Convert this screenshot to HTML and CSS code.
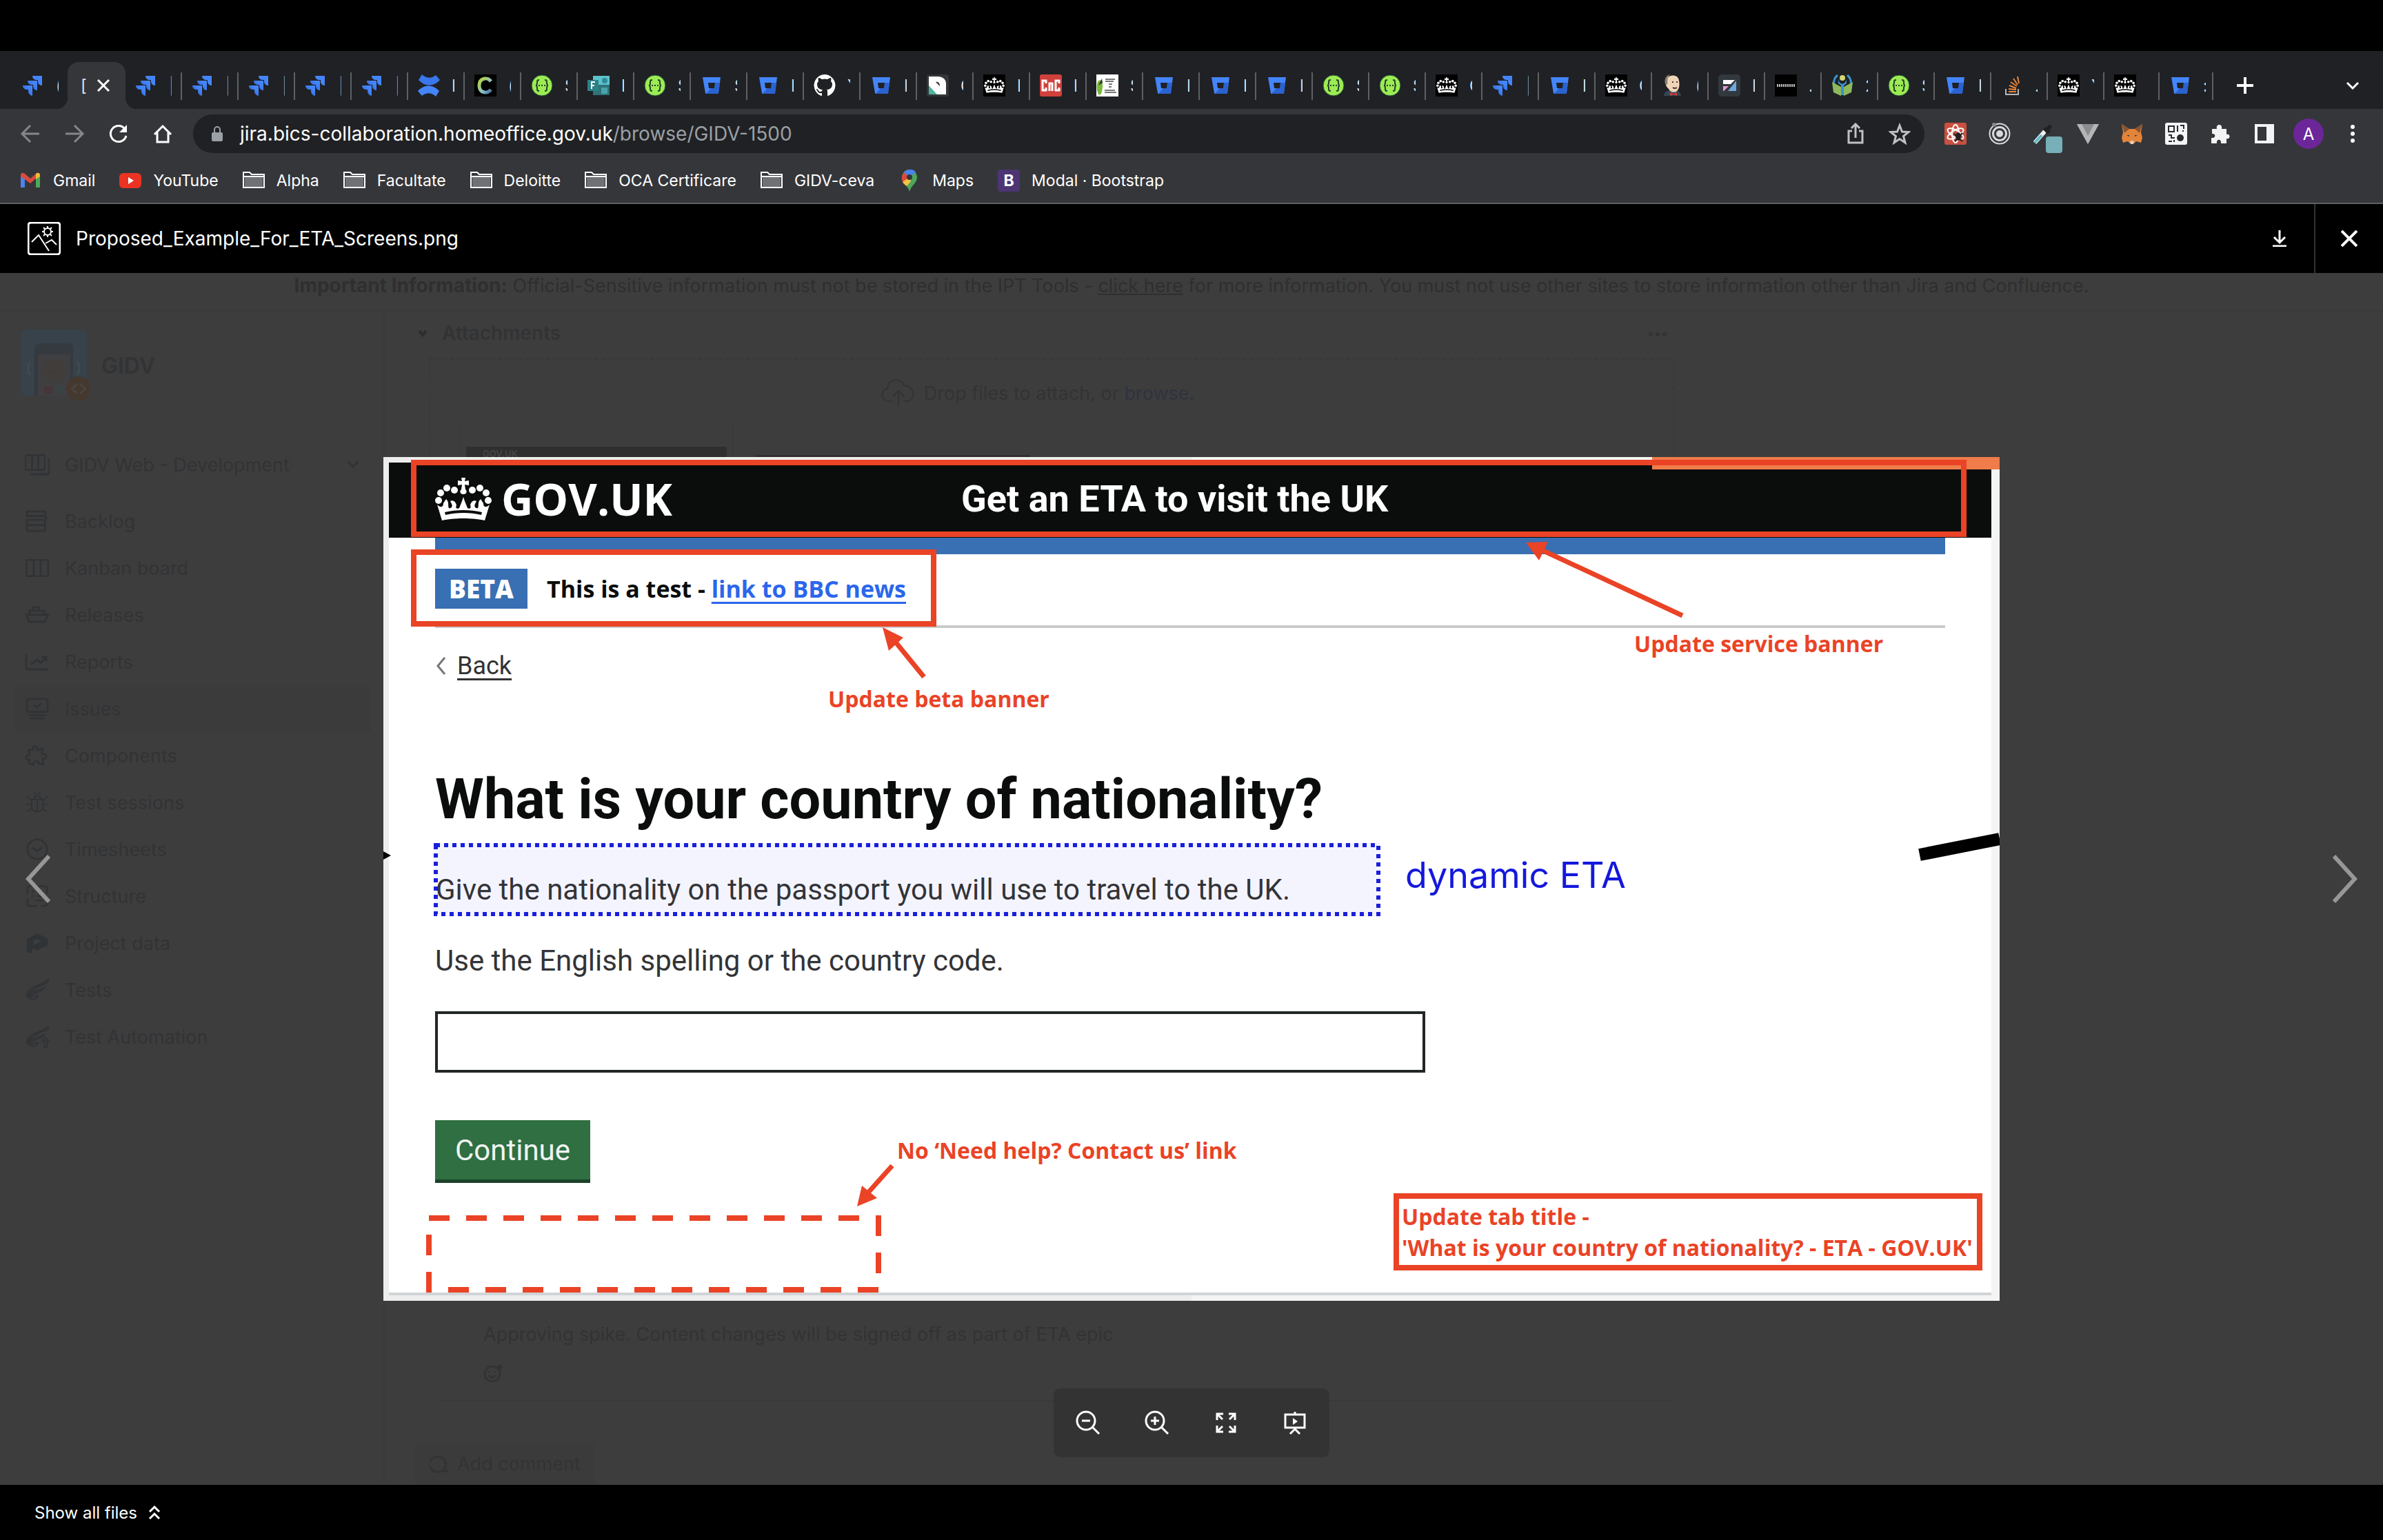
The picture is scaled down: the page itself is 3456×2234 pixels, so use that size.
FILE: index.html
```html
<!DOCTYPE html>
<html lang="en">
<head>
<meta charset="utf-8">
<title>[GIDV-1500] - Jira</title>
<link rel="stylesheet" href="styles.css">
</head>
<body>
<svg class="sprite" aria-hidden="true">
  <defs>
    <linearGradient id="g-jira" x1="1" y1="0" x2="0" y2="1"><stop offset=".3" stop-color="#4485fb"/><stop offset="1" stop-color="#2459c4"/></linearGradient>
    <linearGradient id="g-c" x1="0" y1="0" x2="1" y2="1"><stop offset="0" stop-color="#b5d334"/><stop offset=".6" stop-color="#8fc0c9"/><stop offset="1" stop-color="#3f6fa0"/></linearGradient>
    <symbol id="jira" viewBox="0 0 32 32">
      <path d="M15 2h14v14c-3.500 0-6-2.500-6-6V8h-2c-3.500 0-6-2.500-6-6z" fill="#4485fb"/>
      <path d="M8 9h14v14c-3.500 0-6-2.500-6-6v-2h-2c-3.500 0-6-2.500-6-6z" fill="url(#g-jira)"/>
      <path d="M1 16h14v15c-3.500-.500-6-3-6-7v-2H7c-3.500 0-6-2.500-6-6z" fill="url(#g-jira)"/>
    </symbol>
    <symbol id="confluence" viewBox="0 0 32 32">
      <path d="M1 8 6 0c6 6 14 6 20 1l6 7c-9 10-22 10-31 0z" fill="#3a76ec"/>
      <path d="M31 24 26 32c-6-6-14-6-20-1l-6-7c9-10 22-10 31 0z" fill="#4485fb"/>
    </symbol>
    <symbol id="cee" viewBox="0 0 32 32"><path d="M0 0h32v32H0z"/><path d="M24 10c-5-7-17-5-17 6s12 13 17 6" fill="none" stroke="url(#g-c)" stroke-width="5"/></symbol>
    <symbol id="swagger" viewBox="0 0 32 32">
      <circle cx="16" cy="16" r="15" fill="#9ceb52" stroke="#24523f"/>
      <path d="M12 8c-3 0-3 1-3 4s-1 4-2 4c1 0 2 1 2 4s0 4 3 4M20 8c3 0 3 1 3 4s1 4 2 4c-1 0-2 1-2 4s0 4-3 4" fill="none" stroke="#234028" stroke-width="2"/>
      <path d="M11 15h2v2h-2zM15 15h2v2h-2zM19 15h2v2h-2z" fill="#234028"/>
    </symbol>
    <symbol id="forms" viewBox="0 0 32 32">
      <path d="M8 2h24v28H8z" fill="#2f7277"/><path d="M8 2h24v13H8z" fill="#5cc3cd"/><path d="M20 19h9v9h-9z" fill="#4aa3ab"/>
      <circle cx="25" cy="9" r="4" fill="#2f8a94"/><path d="M0 8h16v16H0z" fill="#2c8187"/>
      <path d="M11 11H6v10M6 16h4" fill="none" stroke="#fff" stroke-width="2"/>
    </symbol>
    <symbol id="bitbucket" viewBox="0 0 32 32">
      <path d="M3 4h26l-3 23q0 1-1 1H8q-1 0-1-1z" fill="#4485fb"/><path d="m28 12-2 15q0 1-1 1H8l7-8h5l1-8z" fill="#2b62cf"/><path d="M11 12h10l-1 8h-8z" fill="#202124"/>
    </symbol>
    <symbol id="github" viewBox="0 0 32 32"><path fill="#fff" d="M16 0a16 16 0 0 0-5 31c1 0 1-.4 1-1v-3c-5 1-6-2-6-2-1-2-2-3-2-3-1-1 0-1 0-1 2 0 3 2 3 2 1 3 4 2 5 1 0-1 1-2 1-2-4 0-8-2-8-8 0-2 1-3 2-4 0-1-1-2 0-5 0 0 2 0 5 2a17 17 0 0 1 8 0c3-2 5-2 5-2 1 3 0 4 0 5 1 1 2 2 2 4 0 6-4 8-8 8 1 1 1 2 1 3v5c0 .6 0 1 1 1A16 16 0 0 0 16 0z"/></symbol>
    <symbol id="slash" viewBox="0 0 32 32"><rect width="32" height="32" rx="4" fill="#333637"/><path d="M3 3h13c8 0 13 5 12 13v13h-5L8 7H3z" fill="#fff"/><path d="M3 5h5l15 24H3z" fill="#fff"/><path d="m3 16 12 13H3z" fill="#4fb39f"/><path d="M13 11c4-1 6 2 6 6z" fill="#333637"/></symbol>
    <symbol id="crown" viewBox="0 0 82 62">
      <g fill="currentColor">
        <circle cx="5" cy="33" r="5"/><circle cx="8" cy="22" r="5"/><circle cx="17" cy="15" r="5"/><circle cx="28" cy="18" r="5"/>
        <circle cx="77" cy="33" r="5"/><circle cx="74" cy="22" r="5"/><circle cx="65" cy="15" r="5"/><circle cx="54" cy="18" r="5"/>
        <path d="M38 0h6l-1 5 6-1v7l-6-1 1 7c3 2 2 7-3 7s-6-5-3-7l1-7-6 1V4l6 1z"/>
        <path fill-rule="evenodd" d="M3 39c5 5 9 4 9-2l4-6c5 5 2 9 4 13 3 1 6-2 4-6l-2-4c4-2 8 1 9 6-2 4 1 6 4 4l4-10 2-6 2 6 4 10c3 2 6 0 4-4 1-5 5-8 9-6l-2 4c-2 4 1 7 4 6 2-4-1-8 4-13l4 6c0 6 4 7 9 2l-7 23C55 58 27 58 10 62zM15 54c16-4 36-4 52 0l1-4c-17-4-37-4-54 0z"/>
      </g>
    </symbol>
    <symbol id="govcrown" viewBox="0 0 32 32"><path d="M0 0h32v32H0z"/><g color="#fff"><use href="#crown" x="1" y="4" width="30" height="23"/></g></symbol>
    <symbol id="cnc" viewBox="0 0 32 32"><rect width="32" height="32" rx="3" fill="#d0403c"/><path d="M9 13V9H4v14h5v-4M14 24V13h4v11M28 13V9h-5v14h5v-4" fill="none" stroke="#fff" stroke-width="3"/></symbol>
    <symbol id="spring" viewBox="0 0 32 32"><path d="M0 0h32v32H0z" fill="#fff"/><path d="M2 10q8-6 7 8t-6 11q-4-8-1-19z" fill="#7ab83a"/><path d="m3 16 5-10 1 6z" fill="#333"/><path d="M13 7h14M13 10h12M18 14h5M18 18h4M12 23h15M12 26h17" stroke="#777" stroke-width="2"/></symbol>
    <symbol id="jenkins" viewBox="0 0 32 32">
      <path d="M3 31c0-5 4-7 8-8h10c4 1 6 4 7 8z" fill="#2f4858"/><path d="M6 9C7 0 24-2 25 9c1 6 1 12-4 16-5 2-9 0-11-4C6 18 5 14 6 9z" fill="#efd5b8"/><path d="M5 14c-2-8 2-13 7-14-5 5-3 8-4 15z" fill="#8a8072"/>
      <path d="M15 11h2M21 11h2M16 19q3 2 6 0" stroke="#4b3a30" stroke-width="2"/><path d="m12 26 5 2 5-2v5l-5-2-5 2z" fill="#d33b33"/>
    </symbol>
    <symbol id="fem" viewBox="0 0 32 32"><rect width="32" height="32" rx="5" fill="#32393e"/><path d="M7 8h17l-6 6H7z" fill="#fff"/><path d="M26 9v15H14z" fill="#6fa8dc"/><path d="M7 17h8l-7 7H7z" fill="#e39ad4"/></symbol>
    <symbol id="devevents" viewBox="0 0 32 32"><path d="M0 0h32v32H0z"/><path d="M3 16h26" stroke="#bbb" stroke-width="4" stroke-dasharray="2 1"/></symbol>
    <symbol id="book" viewBox="0 0 32 32"><path d="M9 1C0 8 3 24 13 29M23 1c9 7 6 23-4 28" fill="none" stroke="#3d92cf" stroke-width="3"/><path d="m1 11 13 7v13L3 26zM31 11l-13 7v13l11-5z" fill="#8db95c"/><circle cx="16" cy="5" r="4" fill="#d4d877"/><path d="M10 6c1 10 11 10 12 0v7l-4 3v14h-4V16l-4-3z" fill="#3d92cf"/></symbol>
    <symbol id="stack" viewBox="0 0 32 32"><path d="M7 21v8h18v-8" fill="none" stroke="#b4b7ba" stroke-width="2"/><path d="M11 25h11M11 21l11 1M12 16l10 4M14 11l9 6M18 6l6 9M24 3l2 10" stroke="#e8863a" stroke-width="2"/></symbol>
    <symbol id="folder" viewBox="0 0 32 24"><path d="M1 1h9l3 3h18v19H1z" fill="none" stroke="#fff" stroke-width="2"/><path d="M3 8h26v14H3z" fill="#707174"/><path d="M1 7h30" stroke="#fff" stroke-width="2"/></symbol>
    <symbol id="board" viewBox="0 0 34 26"><rect x="1" y="1" width="32" height="24" rx="3"/><path d="M12 1v24M22 1v24"/></symbol>
    <symbol id="feather" viewBox="0 0 36 34"><path d="M1 28C4 10 18 14 35 1c1 6-6 7-12 9L4 22M3 26c6-8 16-6 26-13-2 6-8 6-14 9L3 27c5 6 14 6 16-1L6 28"/></symbol>
  </defs>
</svg>

<div class="menubar"></div>

<nav class="tabs" aria-label="Tabs">
  <a class="tab" href="#"><svg><use href="#jira"/></svg><span>(</span></a>
  <a class="tab active" href="#"><span>[</span><svg viewBox="0 0 18 18"><path d="m1 1 16 16M17 1 1 17" stroke="#fff" stroke-width="3"/></svg></a>
  <a class="tab plain" href="#"><svg><use href="#jira"/></svg><span class="dim">|</span></a>
  <a class="tab" href="#"><svg><use href="#jira"/></svg><span class="dim">|</span></a>
  <a class="tab" href="#"><svg><use href="#jira"/></svg><span class="dim">|</span></a>
  <a class="tab" href="#"><svg><use href="#jira"/></svg><span class="dim">|</span></a>
  <a class="tab" href="#"><svg><use href="#jira"/></svg><span class="dim">|</span></a>
  <a class="tab" href="#"><svg><use href="#confluence"/></svg><span>I</span></a>
  <a class="tab" href="#"><svg><use href="#cee"/></svg><span>(</span></a>
  <a class="tab" href="#"><svg><use href="#swagger"/></svg><span>S</span></a>
  <a class="tab" href="#"><svg><use href="#forms"/></svg><span>I</span></a>
  <a class="tab" href="#"><svg><use href="#swagger"/></svg><span>S</span></a>
  <a class="tab" href="#"><svg><use href="#bitbucket"/></svg><span>S</span></a>
  <a class="tab" href="#"><svg><use href="#bitbucket"/></svg><span>I</span></a>
  <a class="tab" href="#"><svg><use href="#github"/></svg><span>Y</span></a>
  <a class="tab" href="#"><svg><use href="#bitbucket"/></svg><span>I</span></a>
  <a class="tab" href="#"><svg><use href="#slash"/></svg><span>C</span></a>
  <a class="tab" href="#"><svg><use href="#govcrown"/></svg><span>I</span></a>
  <a class="tab" href="#"><svg><use href="#cnc"/></svg><span>I</span></a>
  <a class="tab" href="#"><svg><use href="#spring"/></svg><span>S</span></a>
  <a class="tab" href="#"><svg><use href="#bitbucket"/></svg><span>I</span></a>
  <a class="tab" href="#"><svg><use href="#bitbucket"/></svg><span>I</span></a>
  <a class="tab" href="#"><svg><use href="#bitbucket"/></svg><span>I</span></a>
  <a class="tab" href="#"><svg><use href="#swagger"/></svg><span>S</span></a>
  <a class="tab" href="#"><svg><use href="#swagger"/></svg><span>S</span></a>
  <a class="tab" href="#"><svg><use href="#govcrown"/></svg><span>C</span></a>
  <a class="tab" href="#"><svg><use href="#jira"/></svg><span class="dim">|</span></a>
  <a class="tab" href="#"><svg><use href="#bitbucket"/></svg><span>I</span></a>
  <a class="tab" href="#"><svg><use href="#govcrown"/></svg><span>C</span></a>
  <a class="tab" href="#"><svg><use href="#jenkins"/></svg><span>(</span></a>
  <a class="tab" href="#"><svg><use href="#fem"/></svg><span>I</span></a>
  <a class="tab" href="#"><svg><use href="#devevents"/></svg><span>.</span></a>
  <a class="tab" href="#"><svg><use href="#book"/></svg><span>2</span></a>
  <a class="tab" href="#"><svg><use href="#swagger"/></svg><span>S</span></a>
  <a class="tab" href="#"><svg><use href="#bitbucket"/></svg><span>I</span></a>
  <a class="tab" href="#"><svg><use href="#stack"/></svg><span>.</span></a>
  <a class="tab" href="#"><svg><use href="#govcrown"/></svg><span>Y</span></a>
  <a class="tab narrow" href="#"><svg><use href="#govcrown"/></svg></a>
  <a class="tab narrow last" href="#"><svg><use href="#bitbucket"/></svg><span>:</span></a>
  <button class="new-tab" aria-label="New tab"><svg viewBox="0 0 24 24"><path d="M12 0v24M0 12h24" stroke="#fff" stroke-width="4"/></svg></button>
  <button class="tab-search" aria-label="Search tabs"><svg viewBox="0 0 20 12"><path d="m2 2 8 8 8-8" fill="none" stroke="#fff" stroke-width="3"/></svg></button>
</nav>

<div class="toolbar">
  <button class="tool dimmed" aria-label="Back"><svg viewBox="0 0 32 32"><path d="M29 16H4M16 4 4 16l12 12"/></svg></button>
  <button class="tool dimmed" aria-label="Forward"><svg viewBox="0 0 32 32"><path d="M3 16h25M16 4l12 12-12 12"/></svg></button>
  <button class="tool" aria-label="Reload"><svg viewBox="0 0 32 32"><path d="M25 9a11.500 11.500 0 1 0 2 10"/><path d="M28 3v11H17z" fill="#fff" stroke="none"/></svg></button>
  <button class="tool" aria-label="Home"><svg viewBox="0 0 32 32"><path d="M4 17 16 5l12 12M8 14v14h16V14"/></svg></button>
  <div class="omnibox">
    <svg class="lock" viewBox="0 0 18 24"><rect x="1" y="10" width="16" height="13" rx="2" fill="#9aa0a6"/><path d="M5 10V6a4 4 0 0 1 8 0v4" fill="none" stroke="#9aa0a6" stroke-width="2"/></svg>
    <span class="url">jira.bics-collaboration.homeoffice.gov.uk<span>/browse/GIDV-1500</span></span>
    <svg class="omni-icon" viewBox="0 0 32 32"><path d="M11 12H6v17h20V12h-5M16 22V3M10 8l6-6 6 6"/></svg>
    <svg class="omni-icon" viewBox="0 0 32 32"><path d="m16 4 3.500 9 9.500.500-7.500 6 2.500 9.500-8-5.500L8 29l2.500-9.500-7.500-6 9.500-.500z"/></svg>
  </div>
  <div class="extensions">
    <svg viewBox="0 0 32 32"><rect width="32" height="32" rx="3" fill="#c9503f"/><g fill="none" stroke="#fff" stroke-width="2"><ellipse cx="16" cy="16" rx="5" ry="13"/><ellipse cx="16" cy="16" rx="5" ry="13" transform="rotate(60 16 16)"/><ellipse cx="16" cy="16" rx="5" ry="13" transform="rotate(120 16 16)"/></g><ellipse cx="20" cy="20" rx="4" ry="6" fill="#222"/><path d="m14 16 12 11M26 15 15 27" stroke="#222" stroke-width="2"/></svg>
    <svg viewBox="0 0 32 32"><g fill="none" stroke="#d8d9da" stroke-width="2"><circle cx="16" cy="16" r="14.500"/><circle cx="16" cy="16" r="9.500" stroke-width="3"/></g><circle cx="16" cy="16" r="5" fill="#d8d9da"/><circle cx="8" cy="3" r="3" fill="#888"/></svg>
    <span class="with-badge"><svg viewBox="0 0 32 32"><path d="M3 29 18 12" stroke="#eee" stroke-width="6"/><path d="m3 29 10-11" stroke="#5fbccb" stroke-width="4"/><path d="m17 8 7 7M20 12l6-8" stroke="#222" stroke-width="6"/></svg><i></i></span>
    <svg viewBox="0 0 32 32"><path d="M0 2h32L16 31z" fill="#8c8d8f"/><path d="M0 2h7l9 17 9-17h7L16 31z" fill="#b4b5b6"/></svg>
    <svg viewBox="0 0 32 32"><path d="m1 2 11 7h8l11-7-2 12 2 8-2 7-7-2-3 3h-6l-3-3-7 2-2-7 2-8z" fill="#e2843a"/><path d="m1 2 11 7-7 6zM31 2l-11 7 7 6z" fill="#8a5330"/><path d="m13 27 3-1 3 1-1 4h-4z" fill="#dcd0c4"/><path d="M8 18h4v2zM24 18h-4v2z" fill="#333"/></svg>
    <svg viewBox="0 0 32 32"><rect width="32" height="32" rx="3" fill="#f4f5f6"/><g fill="none" stroke="#28292c" stroke-width="2"><path d="M5 5h8v8H5zM18 4v9M22 4h5v5M26 11v2M5 18h4v4h5M5 27h5M13 25v3"/></g><circle cx="22" cy="22" r="5" fill="#28292c"/></svg>
    <svg viewBox="0 0 32 32"><path d="M4 9h7c-2-8 9-8 7 0h7v8c6-2 6 8 0 6v7h-8c1-7-7-7-6 0H3v-8c7 1 7-7 1-6z" fill="#f1f3f4"/></svg>
    <svg viewBox="0 0 32 32"><path d="M2 2h28v28H2zM6 6v20h13V6z" fill="#f1f3f4" fill-rule="evenodd"/></svg>
    <button class="avatar">A</button>
    <svg viewBox="0 0 32 32"><circle cx="16" cy="6" r="3" fill="#fff"/><circle cx="16" cy="16" r="3" fill="#fff"/><circle cx="16" cy="26" r="3" fill="#fff"/></svg>
  </div>
</div>

<nav class="bookmarks" aria-label="Bookmarks">
  <a href="#"><svg viewBox="0 0 32 32"><path d="M2 8v18h6V13z" fill="#4a83ee"/><path d="M30 8v18h-6V13z" fill="#4caa57"/><path d="M2 8c0-4 4-4 6-2l8 7 8-7v7l-8 7L2 10z" fill="#d84b3c"/><path d="M24 6c2-2 6-2 6 2v2l-6 4z" fill="#f2bb3a"/></svg>Gmail</a>
  <a href="#"><svg viewBox="0 0 32 32"><rect y="5" width="32" height="22" rx="6" fill="#ea3323"/><path d="m13 11 8 5-8 5z" fill="#fff"/></svg>YouTube</a>
  <a href="#"><svg viewBox="0 0 32 32"><use href="#folder" y="3" height="24"/></svg>Alpha</a>
  <a href="#"><svg viewBox="0 0 32 32"><use href="#folder" y="3" height="24"/></svg>Facultate</a>
  <a href="#"><svg viewBox="0 0 32 32"><use href="#folder" y="3" height="24"/></svg>Deloitte</a>
  <a href="#"><svg viewBox="0 0 32 32"><use href="#folder" y="3" height="24"/></svg>OCA Certificare</a>
  <a href="#"><svg viewBox="0 0 32 32"><use href="#folder" y="3" height="24"/></svg>GIDV-ceva</a>
  <a href="#"><svg viewBox="0 0 32 32"><path d="M16 32C14 23 5 20 5 11a11 11 0 0 1 22 0c0 9-9 12-11 21z" fill="#4fa65a"/><path d="M16 11 6 18c-2-4-2-9 2-14z" fill="#d94b3d"/><path d="M16 11 8 4C14-2 22-1 25 4z" fill="#4a83ee"/><path d="m6 18 10-7 2 6-6 7c-3-2-5-4-6-6z" fill="#f2c244"/><circle cx="16" cy="11" r="4" fill="#35363a"/></svg>Maps</a>
  <a href="#"><span class="bs">B</span>Modal · Bootstrap</a>
</nav>

<header class="viewer-head">
  <svg class="file-icon" viewBox="0 0 48 48" fill="none" stroke="#fff" stroke-width="2"><rect x="1" y="1" width="46" height="46" rx="4" stroke-width="3"/><path d="m6 29 10-10 15 23M26 31l9-5 7 7"/><circle cx="29" cy="14" r="5"/><path d="M29 6v3M29 19v3M21 14h3M34 14h3M23 8l2 2M35 8l-2 2M23 20l2-2M35 20l-2-2"/></svg>
  <h1>Proposed_Example_For_ETA_Screens.png</h1>
  <button class="download" aria-label="Download"><svg viewBox="0 0 24 24"><path d="M12 0v17M4 10l8 8 8-8M2 23h20" fill="none" stroke="#fff" stroke-width="3"/></svg></button>
  <button class="close" aria-label="Close"><svg viewBox="0 0 24 24"><path d="m1 1 22 22M23 1 1 23" stroke="#fff" stroke-width="4"/></svg></button>
</header>

<div class="stage">
  <div class="page">
    <p class="announcement"><b>Important Information:</b> Official-Sensitive information must not be stored in the IPT Tools - <a href="#">click here</a> for more information. You must not use other sites to store information other than Jira and Confluence.</p>
    <div class="columns">
      <aside class="sidebar">
        <div class="project">
          <svg viewBox="0 0 100 104"><rect width="96" height="96" rx="8" fill="#37424a"/><path d="M20 96V28q0-8 8-8h40q8 0 8 8v68z" fill="#353940"/><path d="M25 36h47v60H25z" fill="#3f3f42"/><circle cx="48" cy="59" r="17" fill="#413d3b"/><path d="M43 61h11q-5 5-11 0z" fill="#453639"/><path d="M34 82h13v11H34z" fill="#453639"/><path d="M50 82h13v11H50z" fill="#394343"/><path d="M14 46q-7 10 0 20M82 46q7 10 0 20" fill="none" stroke="#424a50" stroke-width="3"/><circle cx="84" cy="86" r="18" fill="#45382f"/><path d="m82 79-8 7 8 7M86 79l8 7-8 7" fill="none" stroke="#4b433e" stroke-width="3"/></svg>
          <strong>GIDV</strong>
        </div>
        <a class="item board" href="#"><svg viewBox="0 0 36 32"><use href="#board" y="1" width="30" height="24"/><path d="M35 7v20q0 3-3 3H8"/></svg>GIDV Web - Development<svg class="chev" viewBox="0 0 16 12"><path d="m1 2 7 7 7-7"/></svg></a>
        <a class="item" href="#"><svg viewBox="0 0 36 34"><path d="M30 7V4q0-2-2-2H4Q2 2 2 4v5h26q4 0 4 3t-4 3H2v14q0 3 3 3h22q3 0 3-3V16M2 23h28"/></svg>Backlog</a>
        <a class="item" href="#"><svg viewBox="0 0 36 32"><use href="#board" x="1" y="3" width="34" height="26"/></svg>Kanban board</a>
        <a class="item" href="#"><svg viewBox="0 0 36 32"><path d="M2 16h32l-5 10H6zM7 15v-5h20l3 5M12 9V5h8v4"/></svg>Releases</a>
        <a class="item" href="#"><svg viewBox="0 0 36 32"><path d="M2 5v19q0 3 3 3h29M9 20l9-7 5 5 8-9M24 9h7v6"/></svg>Reports</a>
        <a class="item current" href="#"><svg viewBox="0 0 36 34"><rect x="2" y="2" width="32" height="20" rx="3"/><path d="m13 11 4 4 7-6M4 27h28M7 32h22"/></svg>Issues</a>
        <a class="item" href="#"><svg viewBox="0 0 36 36"><path d="M4 9h7c-2-8 9-8 7 0l9-2-1 9c9-3 9 9 1 7l1 9-8-1c1-6-9-6-8 2l-7-2v-6c-7 1-7-8 0-8z"/></svg>Components</a>
        <a class="item" href="#"><svg viewBox="0 0 36 36" class="thin"><path d="M9 13h18v12q0 8-9 8t-9-8zM18 13v20M12 12q6-9 12 0M13 2l3 4M23 2l-3 4M9 16 1 8M27 16l8-8M9 21H0M27 21h9M10 28l-8 5M26 28l8 5"/></svg>Test sessions</a>
        <a class="item" href="#"><svg viewBox="0 0 36 36"><circle cx="18" cy="18" r="16"/><path d="m10 15 8 6 8-6"/></svg>Timesheets</a>
        <a class="item" href="#"><svg viewBox="0 0 36 36"><path d="M2 14V6q0-4 4-4h6M18 2h12q4 0 4 4v8M34 22v8q0 4-4 4h-6M18 34H6q-4 0-4-4v-8M9 11h4M9 18h4M18 11h10M18 18h10M15 25h13"/></svg>Structure</a>
        <a class="item" href="#"><svg viewBox="0 0 36 34" class="solid"><path d="M2 11 18 2l16 8v11l-16 7-8-3v8l-8-2zM12 13v7l12-6-6-3z" fill-rule="evenodd"/></svg>Project data</a>
        <a class="item" href="#"><svg viewBox="0 0 36 34" class="thin"><use href="#feather"/></svg>Tests</a>
        <a class="item" href="#"><svg viewBox="0 0 36 34" class="thin"><use href="#feather"/><path d="M29 33v-9h-3l5-6 5 6h-3v9z"/></svg>Test Automation</a>
      </aside>
      <main class="issue">
        <div class="section-head">
          <svg viewBox="0 0 24 24"><path d="m7 9 5 6 5-6" fill="none" stroke="#2c2d31" stroke-width="4"/></svg>
          <h2>Attachments</h2>
          <svg class="dots" viewBox="0 0 28 24"><circle cx="4" cy="14" r="3"/><circle cx="14" cy="14" r="3"/><circle cx="24" cy="14" r="3"/></svg>
        </div>
        <div class="dropzone">
          <p class="drop"><svg viewBox="0 0 50 42"><path d="M17 33H10c-12-2-10-17-1-18C9 0 30-2 33 11c14-2 19 17 6 22h-7M25 41V20M17 26l8-8 8 8"/></svg>Drop files to attach, or <a href="#">browse.</a></p>
          <div class="thumbs">
            <div class="thumb"><div class="thumb-bar">GOV.UK</div></div>
            <div class="thumb two"></div>
          </div>
        </div>
        <p class="comment">Approving spike. Content changes will be signed off as part of ETA epic</p>
        <svg class="react" viewBox="0 0 28 28"><circle cx="13" cy="15" r="11"/><path d="M8 17q5 6 10 0M9 11v2M17 11v2M24 1v8M20 5h8"/></svg>
        <hr>
        <button class="add-comment"><svg viewBox="0 0 28 28"><path d="M21 22a12 11 0 1 0-4 3h8z"/></svg>Add comment</button>
      </main>
    </div>
  </div>

  <div class="overlay">
    <button class="arrow" aria-label="Previous"><svg viewBox="0 0 36 70"><path d="M34 2 4 35l30 33"/></svg></button>
    <figure class="shot">
      <div class="mock">
        <div class="gov-head">
          <div class="logo"><svg viewBox="0 0 82 62"><use href="#crown"/></svg>GOV.UK</div>
          <div class="service">Get an ETA to visit the UK</div>
        </div>
        <div class="blue-bar"></div>
        <div class="phase"><strong>BETA</strong><p>This is a test - <a href="#">link to BBC news</a></p></div>
        <div class="body">
          <a class="back" href="#"><svg viewBox="0 0 14 26"><path d="M12 1 2 13l10 12"/></svg><span>Back</span></a>
          <h2>What is your country of nationality?</h2>
          <p class="hint boxed">Give the nationality on the passport you will use to travel to the UK.</p>
          <label class="hint" for="country">Use the English spelling or the country code.</label>
          <input id="country" type="text">
          <button class="continue">Continue</button>
        </div>
      </div>
      <svg class="marks" viewBox="0 0 2344 1224" width="2344" height="1224">
        <path d="M1840 0h504v18h-504z" fill="#ef7c4a"/>
        <g fill="none" stroke="#ea4326" stroke-width="8">
          <path d="M44 8h2248v104H44zM44 138h754v104H44z"/>
          <path d="M66 1104h652v104H66z" stroke-dasharray="30 24"/>
        </g>
        <rect x="76" y="563" width="1367" height="100" fill="none" stroke="#1a1fd9" stroke-width="6" stroke-dasharray="6 6"/>
        <g stroke="#ea4326" stroke-width="7" fill="#ea4326">
          <path d="m784 319-44-54M1884 230l-206-96M738 1028l-34 38"/>
          <path stroke="none" d="m724 247 30 15-21 19zM1657 124l32-1-13 27zM687 1087l7-30 22 18z"/>
        </g>
        <path d="M0 572l11 6-11 6z"/>
        <path d="m2228 577 116-23" stroke="#000" stroke-width="18"/>
      </svg>
      <span class="note beta-note">Update beta banner</span>
      <span class="note service-note">Update service banner</span>
      <span class="note help-note">No ‘Need help? Contact us’ link</span>
      <span class="note title-note">Update tab title -<br>'What is your country of nationality? - ETA - GOV.UK'</span>
      <span class="dynamic">dynamic ETA</span>
    </figure>
    <button class="arrow" aria-label="Next"><svg viewBox="0 0 36 70"><path d="m2 2 30 33L2 68"/></svg></button>
    <div class="zoombar">
      <button aria-label="Zoom out"><svg viewBox="0 0 36 36"><circle cx="15" cy="15" r="13"/><path d="m25 25 9 9M9 15h12"/></svg></button>
      <button aria-label="Zoom in"><svg viewBox="0 0 36 36"><circle cx="15" cy="15" r="13"/><path d="m25 25 9 9M9 15h12M15 9v12"/></svg></button>
      <button aria-label="Fit to screen"><svg viewBox="0 0 36 36"><path d="M5 14V5h9M22 5h9v9M31 22v9h-9M14 31H5v-9M5 5l8 8M31 5l-8 8M31 31l-8-8M5 31l8-8"/></svg></button>
      <button aria-label="Present"><svg viewBox="0 0 36 36"><path d="M4 6h28v19H4zM18 2v4M18 25v4M11 34l7-7 7 7"/><path d="m15 11 7 5-7 5z" fill="#fff" stroke="none"/></svg></button>
    </div>
  </div>
</div>

<footer class="viewer-foot"><a href="#">Show all files<svg viewBox="0 0 18 22"><path d="m2 10 7-7 7 7M2 20l7-7 7 7"/></svg></a></footer>
</body>
</html>
```

FILE: styles.css
```css
* { box-sizing: border-box; }
body {
  margin: 0;
  min-height: 100vh;
  display: flex;
  flex-direction: column;
  background: #000;
  color: #fff;
  font-family: Inter, "Liberation Sans", sans-serif;
  font-size: 28px;
}
button { border: 0; padding: 0; background: none; color: inherit; font: inherit; }
a { color: inherit; text-decoration: none; }
p, h1, h2, figure { margin: 0; }
svg { display: block; flex: none; }
.sprite { position: absolute; width: 0; height: 0; }

/* browser window */
.menubar { height: 74px; }
.tabs { display: flex; height: 84px; padding: 16px 34px 0 16px; background: #202124; }
.tab { position: relative; display: flex; align-items: center; flex: 0 0 82px; height: 68px; padding-left: 16px; }
.tab svg { width: 32px; height: 32px; }
.tab span { width: 4px; margin-left: 17px; overflow: hidden; font-size: 24px; color: #dfe1e5; }
.tab .dim { color: #8f9195; }
.tab + .tab::before { content: ""; position: absolute; left: 0; top: 15px; width: 2px; height: 40px; background: #5f6063; }
.tab.narrow { flex-basis: 80px; }
.tab.last::after { content: ""; position: absolute; right: 0; top: 15px; width: 2px; height: 40px; background: #5f6063; }
.tab.plain::before { display: none; }
.tab.active { background: #35363a; border-radius: 16px 16px 0 0; gap: 16px; flex-basis: 84px; margin-right: -2px; }
.tab.active span { width: 8px; margin: 0 0 0 3px; }
.tab.active svg { width: 18px; height: 18px; }
.tab.active::before, .tab.active::after { content: ""; position: absolute; top: auto; bottom: 0; width: 16px; height: 16px; }
.tab.active::before { left: -16px; background: radial-gradient(circle at 0 0, transparent 16px, #35363a 16px); }
.tab.active::after { right: -16px; background: radial-gradient(circle at 100% 0, transparent 16px, #35363a 16px); }
.new-tab { width: 92px; height: 68px; display: grid; place-items: center; }
.new-tab svg { width: 24px; }
.tab-search { margin-left: auto; height: 68px; display: grid; place-items: center; }
.tab-search svg { width: 20px; }

.toolbar { display: flex; align-items: center; height: 72px; padding: 0 28px; background: #35363a; }
.tool { width: 32px; height: 32px; margin-right: 32px; }
.tool svg { fill: none; stroke: #fff; stroke-width: 3; }
.tool.dimmed svg { stroke: #85868a; }
.omnibox { flex: 1; display: flex; align-items: center; height: 56px; margin-left: -4px; padding: 0 20px 0 26px; border-radius: 28px; background: #202124; }
.lock { width: 18px; height: 24px; }
.url { flex: 1; margin-left: 24px; }
.url span { color: #9aa0a6; }
.omni-icon { width: 32px; height: 32px; margin-left: 32px; fill: none; stroke: #bdc1c6; stroke-width: 3; }
.extensions { display: flex; align-items: center; gap: 32px; margin-left: 29px; }
.extensions svg { width: 32px; height: 32px; }
.with-badge { position: relative; }
.with-badge i { position: absolute; left: 19px; top: 20px; width: 24px; height: 24px; border-radius: 4px; background: #76afb8; }
.avatar { width: 44px; height: 44px; margin: 0 -6px; border-radius: 50%; background: #6c2699; font-size: 24px; }

.bookmarks { display: flex; align-items: center; gap: 35px; height: 66px; padding: 0 28px; background: #35363a; border-bottom: 2px solid #5f6065; font-size: 23px; }
.bookmarks a { display: flex; align-items: center; gap: 17px; }
.bookmarks svg { width: 32px; height: 32px; }
.bs { width: 32px; height: 32px; border-radius: 4px; background: #4d3573; font-weight: 700; line-height: 32px; text-align: center; }

/* file viewer */
.viewer-head { display: flex; align-items: center; height: 100px; padding-left: 40px; }
.viewer-head h1 { flex: 1; margin-left: 22px; font-size: 28px; font-weight: 400; }
.file-icon { width: 48px; height: 48px; }
.download, .close { display: grid; place-items: center; height: 100px; width: 100px; }
.close { border-left: 2px solid #333; }
.download svg, .close svg { width: 24px; height: 24px; }

.stage { flex: 1; display: grid; grid-template-rows: minmax(0, 1fr); overflow: hidden; background: #3d3d3d; }
.page, .overlay { grid-area: 1 / 1; min-width: 0; }

/* dimmed issue page */
.page { height: 0; min-height: 100%; overflow: hidden; color: #323335; font-size: 27px; }
.announcement { height: 56px; border-bottom: 2px solid #393939; line-height: 36px; text-align: center; color: #2f2f2f; }
.announcement b { font-size: 28px; }
.announcement a { text-decoration: underline; }
.columns { display: grid; grid-template-columns: 556px minmax(0, 1872px); }
.sidebar { padding: 28px 18px 0 22px; }
.project { display: flex; align-items: center; gap: 17px; padding-left: 8px; height: 100px; }
.project svg { width: 100px; height: 104px; }
.project strong { font-size: 32px; font-weight: 600; }
.item { display: flex; align-items: center; gap: 22px; height: 68px; padding-left: 14px; border-radius: 6px; }
.item svg { width: 36px; height: 32px; fill: none; stroke: #303336; stroke-width: 3; }
.item svg.thin { stroke-width: 2; }
.item svg.solid { fill: #303336; stroke: none; }
.item.board { margin: 60px 0 14px; }
.item .chev { width: 16px; height: 12px; margin: 0 18px 0 auto; }
.item.current { background: #3b3b3c; }
.issue { padding: 13px 0 0 64px; border-left: 2px solid #3a3a3a; }
.section-head { display: flex; align-items: center; gap: 16px; height: 36px; margin-left: -21px; }
.section-head h2 { flex: 1; font-size: 28px; font-weight: 600; }
.section-head svg { width: 24px; height: 24px; }
.section-head .dots { width: 28px; margin-right: 10px; fill: #323335; }
.dropzone { height: 1300px; margin-top: 19px; padding: 24px 32px 0 42px; border: 2px dashed #393939; }
.drop { display: flex; align-items: center; justify-content: center; height: 48px; padding-right: 50px; white-space: pre; }
.drop svg { width: 50px; height: 42px; margin-right: 12px; fill: none; stroke: #323335; stroke-width: 2; }
.drop a { color: #2f3240; }
.thumbs { display: flex; gap: 32px; margin-top: 20px; }
.thumb { width: 398px; height: 280px; padding-top: 32px; border: 2px solid #3a3a3a; }
.thumb-bar { height: 40px; padding-left: 24px; margin: 0 8px; background: #2f2f2f; color: #444; font-size: 13px; font-weight: 700; line-height: 20px; }
.thumb.two { border-width: 2px 0; background: linear-gradient(#3d3d3d 44px, #352f2f 44px); }
.comment { margin: 96px 0 0 79px; line-height: 40px; }
.react { width: 28px; height: 28px; margin: 22px 0 0 79px; fill: none; stroke: #323335; stroke-width: 3; }
.issue hr { margin: 25px 0 0 18px; border: 0; border-top: 2px solid #393939; }
.add-comment { display: flex; align-items: center; gap: 12px; height: 60px; margin: 60px 0 0 -20px; padding: 0 21px; background: #3b3b3b; }
.add-comment svg { width: 28px; height: 28px; fill: none; stroke: #323335; stroke-width: 3; }

/* overlay */
.overlay { position: relative; display: flex; align-items: center; justify-content: space-between; padding: 0 37px; }
.arrow svg { width: 36px; height: 70px; fill: none; stroke: #979797; stroke-width: 6; }
.zoombar { position: absolute; left: 50%; bottom: 40px; width: 400px; height: 100px; margin-left: -200px; padding: 0 32px; display: flex; align-items: center; justify-content: space-between; border-radius: 10px; background: #333; }
.zoombar svg { width: 36px; height: 36px; fill: none; stroke: #fff; stroke-width: 3; }
.viewer-foot { display: flex; align-items: center; height: 80px; padding-left: 50px; font-size: 24px; }
.viewer-foot a { display: flex; align-items: center; gap: 16px; }
.viewer-foot svg { width: 18px; height: 22px; fill: none; stroke: #fff; stroke-width: 3; }

/* attached screen */
.shot { position: relative; width: 2344px; padding: 8px 12px 8px 8px; background: linear-gradient(to right, #ededed 50%, #f4f4f4 50%); font-family: Roboto, "Liberation Sans", sans-serif; color: #0b0c0c; }
.mock { background: #fff; border-bottom: 4px solid #d0d4d7; }
.gov-head { display: flex; align-items: center; height: 109px; padding: 0 67px 4px; background: #0b0c0c; color: #fff; font-weight: 700; }
.logo { display: flex; align-items: center; gap: 14px; width: 763px; font-family: "Open Sans", sans-serif; font-size: 64px; line-height: 72px; }
.logo svg { width: 82px; height: 62px; }
.service { font-size: 54px; line-height: 64px; }
.blue-bar { height: 24px; margin: 0 67px; background: #396fb3; }
.phase { display: flex; align-items: center; gap: 28px; height: 107px; margin: 0 67px; padding-bottom: 4px; border-bottom: 4px solid #c9cbcb; font-family: "Open Sans", sans-serif; font-size: 34px; font-weight: 700; }
.phase strong { height: 58px; width: 134px; background: #396fb3; color: #fff; font-size: 37px; line-height: 58px; text-align: center; }
.phase a { color: #2b66ec; text-decoration: underline; text-decoration-thickness: 3px; text-underline-offset: 6px; }
.body { padding: 35px 67px 159px; }
.back { display: flex; align-items: center; gap: 16px; width: 120px; height: 40px; margin-left: 2px; font-size: 36px; color: #333; }
.back svg { width: 14px; height: 26px; fill: none; stroke: #777; stroke-width: 3; }
.back span { text-decoration: underline; text-decoration-thickness: 3px; text-underline-offset: 6px; }
.body h2 { margin-top: 130px; font-size: 81px; line-height: 88px; font-weight: 700; }
.hint { display: block; margin-top: 41px; font-size: 42px; line-height: 48px; color: #333437; }
.hint.boxed { width: 1373px; height: 106px; margin: 19px 0 0 -2px; padding: 44px 0 0 3px; background: #f4f4ff; }
.body input { display: block; width: 1436px; height: 89px; margin-top: 49px; padding: 0 16px; border: 4px solid #222626; background: #fff; font: inherit; font-size: 42px; }
.continue { display: block; width: 225px; height: 91px; margin-top: 69px; background: #2f6f42; border-bottom: 5px solid #1b4228; color: #f0f5f1; font-size: 42px; }
.marks { position: absolute; left: 0; top: 0; }
.note { position: absolute; font-family: "Open Sans", sans-serif; font-size: 32px; line-height: 45px; font-weight: 700; color: #ea4326; white-space: nowrap; }
.beta-note { left: 645px; top: 328px; }
.service-note { left: 1814px; top: 248px; }
.help-note { left: 745px; top: 983px; }
.title-note { left: 1465px; top: 1068px; width: 854px; height: 112px; padding: 3px 0 0 4px; border: 8px solid #ea4326; }
.dynamic { position: absolute; left: 1482px; top: 575px; font-family: Inter, sans-serif; font-size: 52px; line-height: 64px; color: #1418dc; }
```
